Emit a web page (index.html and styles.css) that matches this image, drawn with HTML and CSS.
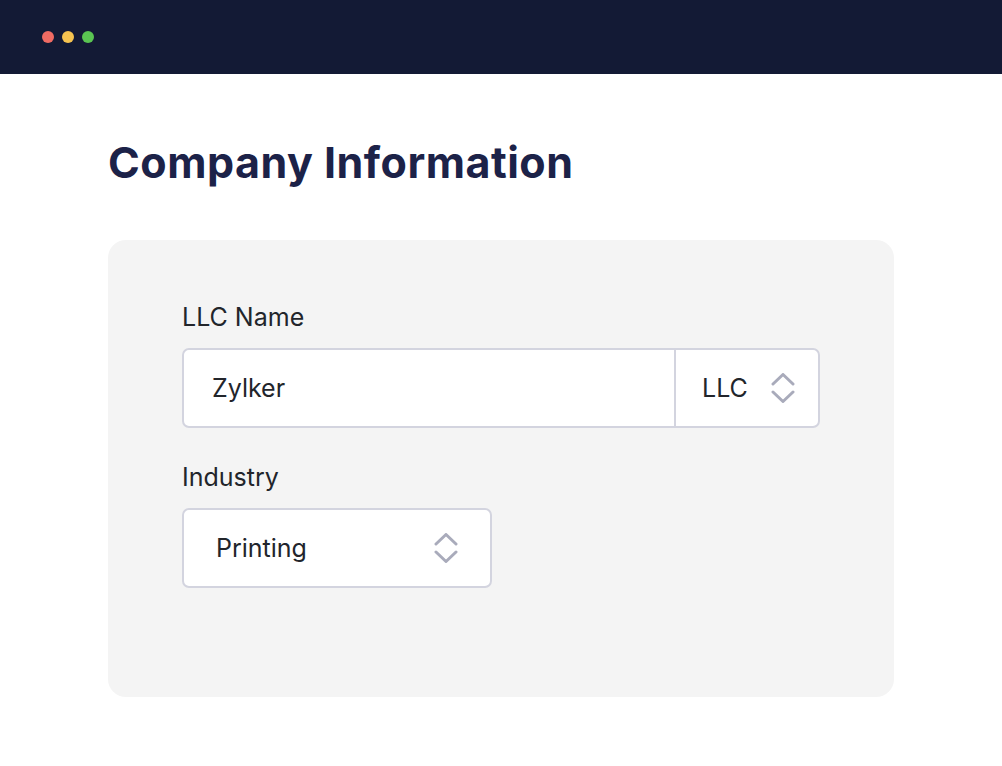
FILE: index.html
```html
<!DOCTYPE html>
<html lang="en">
<head>
<meta charset="utf-8">
<title>Company Information</title>
<link rel="stylesheet" href="styles.css">
</head>
<body>
<header class="topbar">
  <span class="dot dot-red"></span>
  <span class="dot dot-yellow"></span>
  <span class="dot dot-green"></span>
</header>
<main class="content">
  <h1 class="title">Company Information</h1>
  <section class="card">
    <div class="field">
      <label class="label">LLC Name</label>
      <div class="input-group">
        <div class="input-text">Zylker</div>
        <div class="input-suffix">
          <span>LLC</span>
          <svg class="chev" viewBox="0 0 24 30" width="24" height="30"><path d="M2 11 L12 1.5 L22 11" /><path d="M2 19 L12 28.5 L22 19" /></svg>
        </div>
      </div>
    </div>
    <div class="field">
      <label class="label">Industry</label>
      <div class="select">
        <span>Printing</span>
        <svg class="chev" viewBox="0 0 24 30" width="24" height="30"><path d="M2 11 L12 1.5 L22 11" /><path d="M2 19 L12 28.5 L22 19" /></svg>
      </div>
    </div>
  </section>
</main>
</body>
</html>
```
FILE: styles.css
```css
* { box-sizing: border-box; }
html, body { margin: 0; padding: 0; background: #ffffff; }
body { font-family: "Inter", "Liberation Sans", sans-serif; color: #22252b; }

.topbar {
  height: 74px;
  background: #131a35;
  display: flex;
  align-items: center;
  gap: 8px;
  padding-left: 42px;
}
.dot { width: 12px; height: 12px; border-radius: 50%; display: block; }
.dot-red { background: #f06b63; }
.dot-yellow { background: #f6c350; }
.dot-green { background: #5ac552; }

.content { padding: 0 108px; }
.title {
  margin: 0;
  padding-top: 62px;
  font-size: 43px;
  line-height: 52px;
  font-weight: 700;
  color: #1c2248;
  letter-spacing: 0.5px;
}
.card {
  margin-top: 52px;
  height: 457px;
  background: #f4f4f4;
  border-radius: 18px;
  padding: 63px 74px;
  display: flex;
  flex-direction: column;
  gap: 35px;
}
.field { display: flex; flex-direction: column; gap: 17px; }
.label { font-size: 25px; line-height: 28px; color: #22252b; }

.input-group {
  width: 638px;
  height: 80px;
  border: 2px solid #d3d4df;
  border-radius: 7px;
  background: #fff;
  display: flex;
}
.input-text {
  flex: 1;
  display: flex;
  align-items: center;
  padding-left: 28px;
  font-size: 25px;
  border-right: 2px solid #d3d4df;
}
.input-suffix {
  width: 142px;
  display: flex;
  align-items: center;
  justify-content: space-between;
  padding: 0 23px 0 26px;
  font-size: 25px;
}
.select {
  width: 310px;
  height: 80px;
  border: 2px solid #d3d4df;
  border-radius: 7px;
  background: #fff;
  display: flex;
  align-items: center;
  justify-content: space-between;
  padding: 0 32px 0 32px;
  font-size: 25px;
}
.chev { display: block; }
.chev path { fill: none; stroke: #a9abbb; stroke-width: 3; stroke-linecap: round; stroke-linejoin: round; }
```
